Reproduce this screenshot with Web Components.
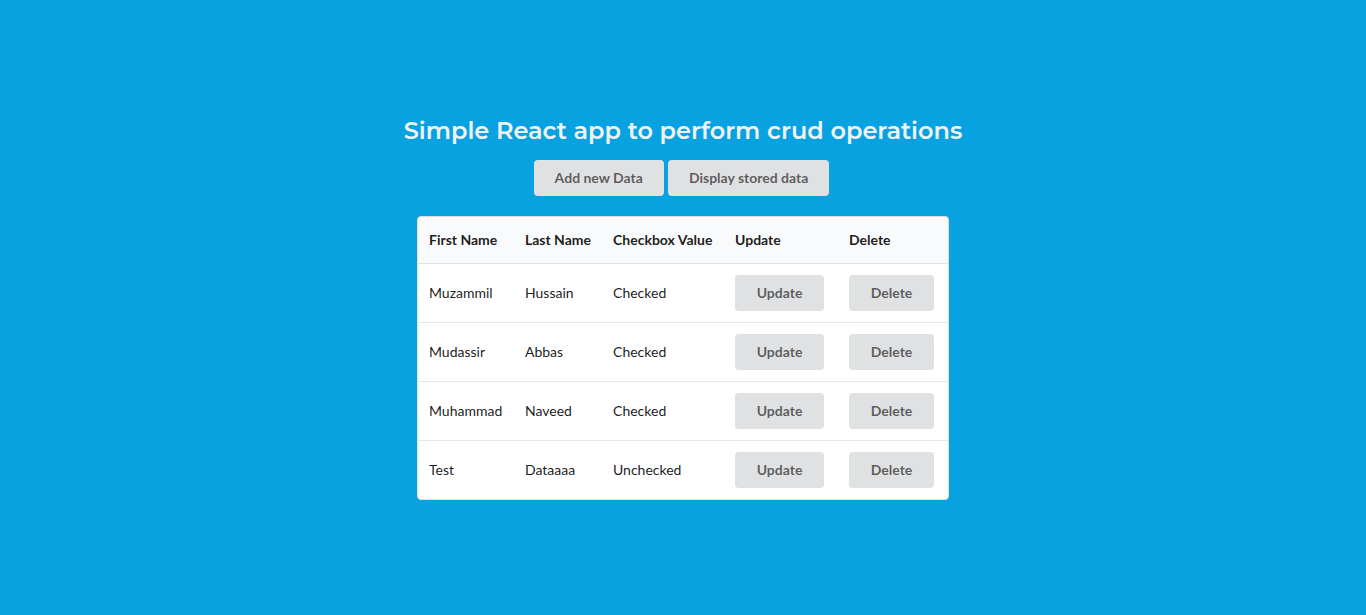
<!DOCTYPE html>
<html lang="en">
<head>
<meta charset="utf-8">
<meta name="viewport" content="width=device-width, initial-scale=1">
<title>React Crud</title>
<style>
  body { margin: 0; background: #09a2e1; color: rgba(0,0,0,.9); font: 14px/18px Lato, sans-serif; }
</style>
</head>
<body>
<crud-app>
  <span slot="title">Simple React app to perform crud operations</span>
  <ui-button slot="actions">Add new Data</ui-button>
  <ui-button slot="actions">Display stored data</ui-button>
  <people-table></people-table>
</crud-app>
<script>
class CrudApp extends HTMLElement {
  constructor() {
    super();
    this.attachShadow({ mode: 'open' }).innerHTML = `
      <style>
        :host { display: block; }
        main { min-height: 100vh; display: flex; flex-direction: column; align-items: center; justify-content: center; }
        h2 { margin: 0 0 13px; color: #f0f3f6; font: 600 24px/32px Montserrat, Inter, sans-serif; text-align: center; }
        nav { display: flex; flex-wrap: wrap; justify-content: center; column-gap: 1px; margin-bottom: 20px; }
      </style>
      <main>
        <h2><slot name="title"></slot></h2>
        <nav><slot name="actions"></slot></nav>
        <slot></slot>
      </main>`;
  }
}

class UiButton extends HTMLElement {
  constructor() {
    super();
    this.attachShadow({ mode: 'open' }).innerHTML = `
      <style>
        :host { display: block; padding-right: 3px; }
        button { display: block; width: 100%; margin: 0; padding: 11px 21px; border: 0; border-radius: 4px;
          background: #e0e1e2; color: rgba(0,0,0,.6); font: 700 14px/14px Lato, sans-serif; cursor: pointer; }
        button:hover { background: #cacbcd; color: rgba(0,0,0,.8); }
      </style>
      <button type="button"><slot></slot></button>`;
  }
}

class PeopleTable extends HTMLElement {
  constructor() {
    super();
    const people = [
      ['Muzammil', 'Hussain', 'Checked'],
      ['Mudassir', 'Abbas', 'Checked'],
      ['Muhammad', 'Naveed', 'Checked'],
      ['Test', 'Dataaaa', 'Unchecked']
    ];
    const heads = ['First Name', 'Last Name', 'Checkbox Value', 'Update', 'Delete'];
    const widths = [96, 88, 122, 114, 110];
    const row = p => `<tr>${p.map(v => `<td>${v}</td>`).join('')}<td><ui-button>Update</ui-button></td><td><ui-button>Delete</ui-button></td></tr>`;
    this.attachShadow({ mode: 'open' }).innerHTML = `
      <style>
        :host { display: block; }
        table { border-collapse: separate; border-spacing: 0; background: #fff; text-align: left;
          white-space: nowrap; border: 1px solid #dededf; border-radius: 4px; }
        th { padding: 14px 11px; background: #f9fafb; font-weight: 700; border-bottom: 1px solid #e1e2e3; }
        th:first-child { border-top-left-radius: 4px; }
        th:last-child { border-top-right-radius: 4px; }
        td { padding: 11px; }
        tr + tr td { border-top: 1px solid #e7e7e7; }
      </style>
      <table>
        <colgroup>${widths.map(w => `<col style="width:${w}px">`).join('')}</colgroup>
        <thead><tr>${heads.map(h => `<th scope="col">${h}</th>`).join('')}</tr></thead>
        <tbody>${people.map(row).join('')}</tbody>
      </table>`;
  }
}

customElements.define('crud-app', CrudApp);
customElements.define('ui-button', UiButton);
customElements.define('people-table', PeopleTable);
</script>
</body>
</html>
